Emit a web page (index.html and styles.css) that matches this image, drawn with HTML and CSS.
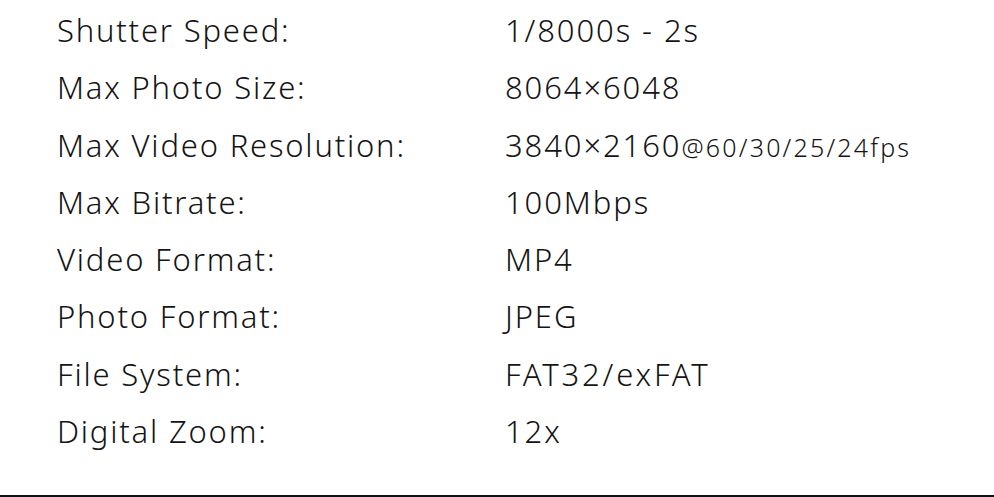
FILE: index.html
```html
<!DOCTYPE html>
<html>
<head>
<meta charset="utf-8">
<link rel="stylesheet" href="styles.css">
</head>
<body>
<div class="page">
  <div class="specs">
    <div class="row"><span class="label">Shutter Speed:</span><span class="value">1/8000s - 2s</span></div>
    <div class="row"><span class="label">Max Photo Size:</span><span class="value">8064×6048</span></div>
    <div class="row"><span class="label">Max Video Resolution:</span><span class="value">3840×2160<span class="small">@60/30/25/24fps</span></span></div>
    <div class="row"><span class="label">Max Bitrate:</span><span class="value">100Mbps</span></div>
    <div class="row"><span class="label">Video Format:</span><span class="value">MP4</span></div>
    <div class="row"><span class="label">Photo Format:</span><span class="value">JPEG</span></div>
    <div class="row"><span class="label">File System:</span><span class="value wide">FAT32/exFAT</span></div>
    <div class="row"><span class="label">Digital Zoom:</span><span class="value">12x</span></div>
  </div>
  <div class="rule"></div>
</div>
</body>
</html>
```

FILE: styles.css
```css
html, body {
  margin: 0;
  padding: 0;
  background: #ffffff;
}
.page {
  width: 994px;
  height: 497px;
  display: flex;
  flex-direction: column;
  justify-content: space-between;
}
.specs {
  padding-top: 2px;
  padding-left: 57px;
  font-family: "Noto Sans", sans-serif;
  font-size: 31px;
  font-weight: 300;
  letter-spacing: 1.8px;
  color: #141414;
}
.row {
  display: flex;
  height: 57.3px;
  line-height: 57.3px;
}
.label {
  width: 448px;
}
.value {
  letter-spacing: 1.9px;
}
.value.wide {
  letter-spacing: 2.8px;
}
.small {
  font-size: 25px;
  letter-spacing: 2.2px;
}
.rule {
  height: 2px;
  background: #111;
}
```
